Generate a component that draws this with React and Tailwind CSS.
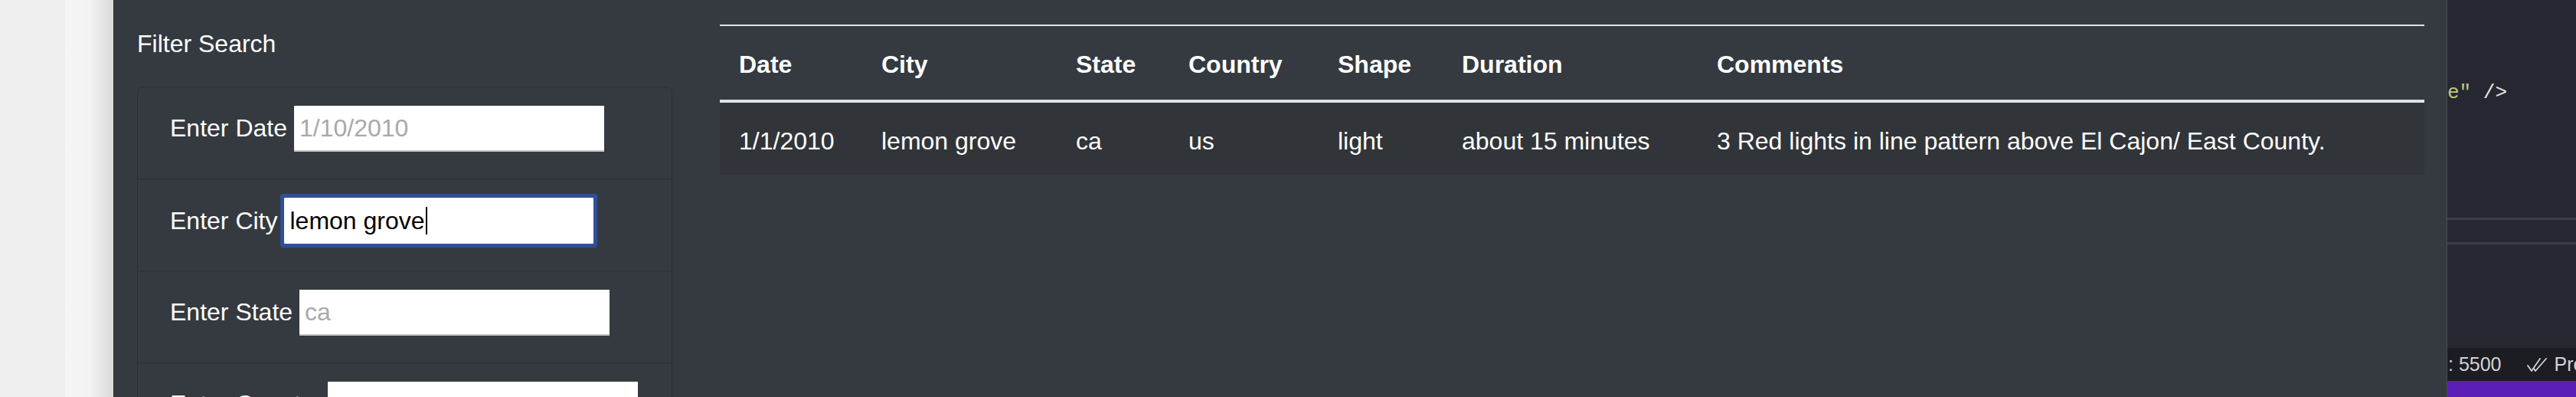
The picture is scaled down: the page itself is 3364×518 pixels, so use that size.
import React from 'react'

const filters = [
  { label: 'Enter Date', placeholder: '1/10/2010' },
  { label: 'Enter City', value: 'lemon grove', focused: true },
  { label: 'Enter State', placeholder: 'ca' },
  { label: 'Enter Country', placeholder: 'us' },
  { label: 'Enter Shape', placeholder: 'light' },
]

const columns = [
  { name: 'Date', width: 'w-[186px]' },
  { name: 'City', width: 'w-[254px]' },
  { name: 'State', width: 'w-[147px]' },
  { name: 'Country', width: 'w-[195px]' },
  { name: 'Shape', width: 'w-[162px]' },
  { name: 'Duration', width: 'w-[333px]' },
  { name: 'Comments', width: 'w-[949px]' },
]

const sightings = [
  ['1/1/2010', 'lemon grove', 'ca', 'us', 'light', 'about 15 minutes', '3 Red lights in line pattern above El Cajon/ East County.'],
]

function FilterItem({ label, placeholder, value, focused }) {
  return (
    <li className="h-[120px] border-b border-[#2c3035] px-[42px] pt-[24px]">
      <div className="flex items-baseline gap-[9px]">
        <label className="leading-[48px] whitespace-nowrap">{label}</label>
        {focused ? (
          <div className="flex h-[60px] w-[404px] items-center rounded-[1px] bg-white px-[7px] text-black ring-[5px] ring-[#2f5096]">
            <span>{value}</span>
            <span className="ml-[1px] h-[36px] w-[2px] bg-black" />
          </div>
        ) : (
          <input
            type="text"
            readOnly
            placeholder={placeholder}
            className="h-[60px] w-[405px] border-0 border-b-2 border-[#c4c4c4] bg-white px-[7px] text-black outline-none placeholder:text-[#a9a9a9]"
          />
        )}
      </div>
    </li>
  )
}

function CheckAll() {
  return (
    <svg width="27" height="20" viewBox="0 0 27 20" fill="none" stroke="#d4d4d4" strokeWidth="1.8" strokeLinecap="round" strokeLinejoin="round">
      <polyline points="1,11 6,18 17,2" />
      <polyline points="9,15 11,18 25,2" />
    </svg>
  )
}

export default function App() {
  return (
    <div className="flex h-[518px] w-[3364px] overflow-hidden font-['Liberation_Sans',Arial,sans-serif] text-[32px] text-white">
      {/* browser edge */}
      <div className="w-[85px] shrink-0 bg-[#efefef]" />
      <div className="w-[63px] shrink-0 bg-gradient-to-r from-[#f6f6f6] via-[#f3f3f3] to-[#d9d9d9]" />

      {/* page */}
      <div className="flex w-[3048px] shrink-0 border-r border-[#454a50] bg-[#343a40]">
        <div className="w-[762px] shrink-0 pl-[31px] pr-[32px] pt-[33px]">
          <div className="leading-[48px]">Filter Search</div>
          <ul className="mt-[32px] rounded-[8px] border border-[#2c3035]">
            {filters.map(f => (
              <FilterItem key={f.label} {...f} />
            ))}
          </ul>
        </div>

        <div className="flex-1 px-[30px] pt-[32px]">
          <table className="w-full table-fixed border-separate border-spacing-0 leading-[48px]">
            <thead>
              <tr>
                {columns.map(c => (
                  <th key={c.name} className={`${c.width} border-t-2 border-b-4 border-[#dee2e6] pl-[25px] pt-[26px] pb-[22px] text-left font-bold`}>
                    {c.name}
                  </th>
                ))}
              </tr>
            </thead>
            <tbody>
              {sightings.map((row, i) => (
                <tr key={i} className="bg-[#313539]">
                  {row.map((cell, j) => (
                    <td key={j} className="whitespace-nowrap pl-[25px] pt-[26px] pb-[20px]">{cell}</td>
                  ))}
                </tr>
              ))}
            </tbody>
          </table>
        </div>
      </div>

      {/* editor strip */}
      <div className="flex flex-1 flex-col bg-[#262831]">
        <div className="h-[284px] pt-[106px] font-['Liberation_Mono',monospace] text-[26px] leading-[30px] whitespace-nowrap">
          <span className="text-[#c3c87e]">e"</span>
          <span className="text-[#e6e6e6]"> /&gt;</span>
        </div>
        <div className="h-[3px] bg-[#3b3d4a]" />
        <div className="h-[29px]" />
        <div className="h-[3px] bg-[#3b3d4a]" />
        <div className="flex-1" />
        <div className="flex h-[43px] items-center whitespace-nowrap bg-[#1c1d23] pl-[1px] text-[25px] text-[#d4d4d4]">
          <span>: 5500</span>
          <span className="ml-[33px] flex items-center gap-[9px]">
            <CheckAll />
            <span>Prettier</span>
          </span>
        </div>
        <div className="h-[21px] bg-[#5b1fb8]" />
      </div>
    </div>
  )
}
